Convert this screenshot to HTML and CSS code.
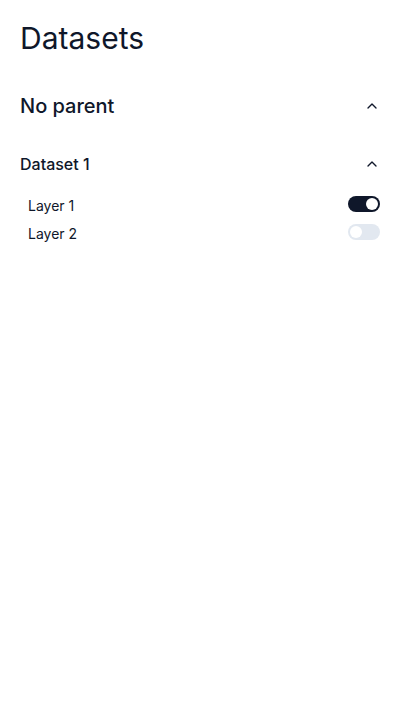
FILE: index.html
```html
<!DOCTYPE html>
<html>
<head>
<meta charset="utf-8">
<link rel="stylesheet" href="styles.css">
</head>
<body>
<main class="page">
  <h1 class="title">Datasets</h1>
  <section class="group">
    <div class="group-head">
      <span class="group-name">No parent</span>
      <svg class="chev" width="16" height="16" viewBox="0 0 24 24" fill="none" stroke="currentColor" stroke-width="2" stroke-linecap="round" stroke-linejoin="round"><path d="m18 15-6-6-6 6"/></svg>
    </div>
    <div class="dataset">
      <div class="dataset-head">
        <span class="dataset-name">Dataset 1</span>
        <svg class="chev" width="16" height="16" viewBox="0 0 24 24" fill="none" stroke="currentColor" stroke-width="2" stroke-linecap="round" stroke-linejoin="round"><path d="m18 15-6-6-6 6"/></svg>
      </div>
      <ul class="layers">
        <li class="layer"><span>Layer 1</span><span class="toggle on"><span class="knob"></span></span></li>
        <li class="layer"><span>Layer 2</span><span class="toggle"><span class="knob"></span></span></li>
      </ul>
    </div>
  </section>
</main>
</body>
</html>
```
FILE: styles.css
```css
* { box-sizing: border-box; }
html, body { margin: 0; background: #fff; }
body {
  font-family: Inter, "Noto Sans", sans-serif;
  color: #0f172a;
}
.page { padding: 20px; }
.title {
  margin: 0;
  font-size: 30px;
  line-height: 36px;
  font-weight: 400;
}
.group { margin-top: 36px; }
.group-head, .dataset-head {
  display: flex;
  align-items: center;
  justify-content: space-between;
}
.group-head { height: 28px; }
.group-name { font-size: 20px; line-height: 28px; font-weight: 500; }
.dataset { margin-top: 32px; }
.dataset-head { height: 24px; }
.dataset-name { font-size: 16px; line-height: 24px; font-weight: 500; }
.chev { display: block; color: #0f172a; }
.layers {
  list-style: none;
  margin: 16px 0 0;
  padding: 0 0 0 8px;
}
.layer {
  display: flex;
  align-items: center;
  justify-content: space-between;
  height: 28px;
  font-size: 14px;
  line-height: 20px;
}
.toggle {
  display: flex;
  align-items: center;
  width: 32px;
  height: 16px;
  margin-bottom: 4px;
  border-radius: 8px;
  background: #e2e8f0;
  padding: 2px;
}
.toggle.on { background: #0f172a; justify-content: flex-end; }
.knob {
  width: 12px;
  height: 12px;
  border-radius: 50%;
  background: #fff;
}
```
